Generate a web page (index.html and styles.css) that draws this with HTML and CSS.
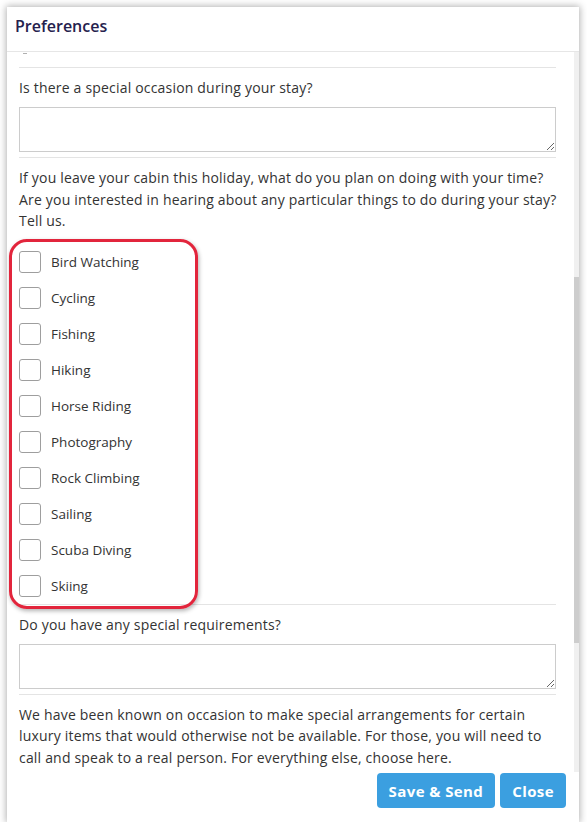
FILE: index.html
```html
<!DOCTYPE html>
<html>
<head>
<meta charset="utf-8">
<link rel="stylesheet" href="styles.css">
</head>
<body>
<div class="dialog">
  <div class="dialog-header">
    <h1 class="dialog-title">Preferences</h1>
  </div>
  <div class="dialog-main">
    <div class="dialog-body">
      <div class="peek"></div>
      <div class="sep"></div>
      <label class="question">Is there a special occasion during your stay?</label>
      <textarea class="field"></textarea>
      <div class="sep"></div>
      <p class="para"><span class="line">If you leave your cabin this holiday, what do you plan on doing with your time?</span><span class="line">Are you interested in hearing about any particular things to do during your stay?</span><span class="line">Tell us.</span></p>
      <div class="options">
        <div class="highlight"></div>
        <label class="option"><span class="box"></span><span class="opt-text">Bird Watching</span></label>
        <label class="option"><span class="box"></span><span class="opt-text">Cycling</span></label>
        <label class="option"><span class="box"></span><span class="opt-text">Fishing</span></label>
        <label class="option"><span class="box"></span><span class="opt-text">Hiking</span></label>
        <label class="option"><span class="box"></span><span class="opt-text">Horse Riding</span></label>
        <label class="option"><span class="box"></span><span class="opt-text">Photography</span></label>
        <label class="option"><span class="box"></span><span class="opt-text">Rock Climbing</span></label>
        <label class="option"><span class="box"></span><span class="opt-text">Sailing</span></label>
        <label class="option"><span class="box"></span><span class="opt-text">Scuba Diving</span></label>
        <label class="option"><span class="box"></span><span class="opt-text">Skiing</span></label>
      </div>
      <div class="sep"></div>
      <label class="question">Do you have any special requirements?</label>
      <textarea class="field"></textarea>
      <div class="sep"></div>
      <p class="para"><span class="line">We have been known on occasion to make special arrangements for certain</span><span class="line">luxury items that would otherwise not be available. For those, you will need to</span><span class="line">call and speak to a real person. For everything else, choose here.</span></p>
    </div>
    <div class="scrollbar"><div class="thumb"></div></div>
  </div>
  <div class="dialog-footer">
    <button class="btn">Save &amp; Send</button>
    <button class="btn">Close</button>
  </div>
</div>
</body>
</html>
```

FILE: styles.css
```css
html, body {
  margin: 0;
  padding: 0;
  background: #ffffff;
}
body {
  font-family: "Open Sans", "Liberation Sans", sans-serif;
  font-size: 14px;
  color: #333333;
}
.dialog {
  margin: 7px 0 0 7px;
  width: 572px;
  height: 815px;
  background: #ffffff;
  box-shadow: 0 0 7px 1px rgba(0, 0, 0, 0.3);
  display: flex;
  flex-direction: column;
}
.dialog-header {
  height: 45px;
  box-sizing: border-box;
  border-bottom: 1px solid #e6e6e6;
  display: flex;
  align-items: center;
  padding-left: 8px;
}
.dialog-title {
  margin: 0;
  font-size: 16px;
  font-weight: 600;
  color: #25214d;
  line-height: 22px;
  padding-bottom: 7px;
}
.dialog-main {
  height: 720px;
  display: flex;
  overflow: hidden;
}
.dialog-body {
  flex: 1;
  min-width: 0;
  padding: 1px 18px 0 12px;
  overflow: hidden;
}
.scrollbar {
  width: 5px;
  flex: none;
  background: #f0f0f0;
  display: flex;
  flex-direction: column;
}
.thumb {
  margin-top: 225px;
  height: 366px;
  background: #cdcdcd;
}
.peek {
  width: 4px;
  height: 1px;
  margin-left: 4px;
  background: #b0b0b0;
  margin-bottom: 13px;
}
.sep {
  height: 1px;
  background: #e4e4e4;
}
.question {
  display: block;
  margin-top: 10px;
  line-height: 20px;
  letter-spacing: 0.19px;
}
.field {
  display: block;
  box-sizing: border-box;
  width: 100%;
  height: 45px;
  margin: 9px 0 5px 0;
  border: 1px solid #cccccc;
  border-radius: 0;
  font-family: inherit;
  font-size: 14px;
  padding: 4px 6px;
  background: #ffffff;
}
.para {
  margin: 9px 0 0 0;
  line-height: 21.5px;
  letter-spacing: 0.19px;
}
.line {
  display: block;
  white-space: nowrap;
}
.options {
  position: relative;
  margin-top: 12px;
  display: flex;
  flex-direction: column;
}
.option {
  height: 36px;
  display: flex;
  align-items: center;
}
.box {
  width: 22px;
  height: 22px;
  box-sizing: border-box;
  border: 1px solid #9e9e9e;
  border-radius: 3px;
  background: #ffffff;
}
.opt-text {
  margin-left: 10px;
  line-height: 20px;
  font-size: 13.5px;
}
.highlight {
  position: absolute;
  left: -10px;
  top: -5px;
  width: 189px;
  height: 370px;
  box-sizing: border-box;
  border: 3px solid #e2253c;
  border-radius: 18px;
  box-shadow: 1px 2px 4px rgba(0, 0, 0, 0.3);
  pointer-events: none;
}
.dialog-footer {
  flex: 1;
  display: flex;
  justify-content: flex-end;
  align-items: flex-start;
  gap: 5px;
  padding: 1px 13px 0 0;
}
.btn {
  height: 35px;
  padding: 0 12px;
  border: none;
  border-radius: 4px;
  background: #3b9fe0;
  color: #ffffff;
  font-family: "Open Sans", "Liberation Sans", sans-serif;
  font-size: 15px;
  font-weight: 700;
  letter-spacing: 0.4px;
}
```
